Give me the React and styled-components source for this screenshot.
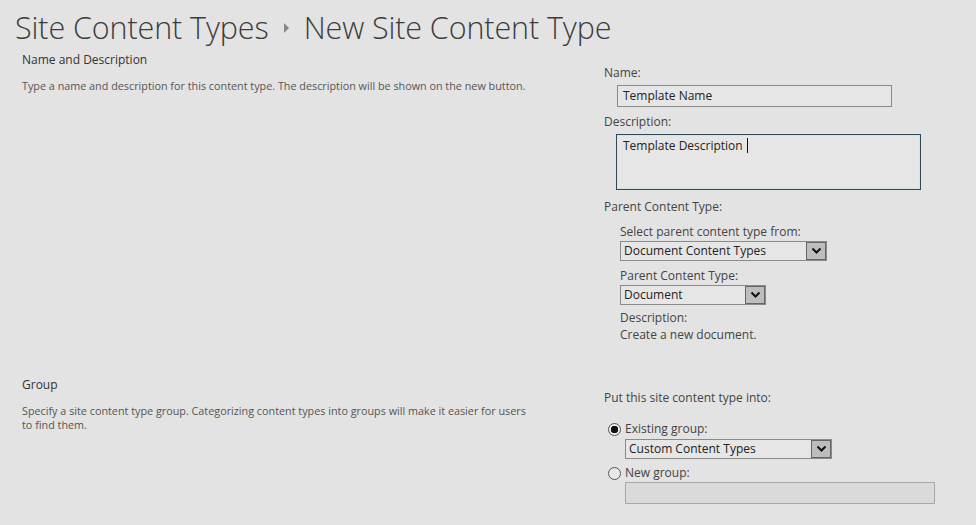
import React from 'react';
import styled, { createGlobalStyle } from 'styled-components';

const GlobalStyle = createGlobalStyle`
	html, body {
		margin: 0;
		background: #e3e3e3;
	}
	body {
		font-family: 'Open Sans', 'Noto Sans', sans-serif;
		color: #444;
		width: 976px;
		height: 525px;
		overflow: hidden;
	}
`;

function Chevron() {
	return (
		<svg width='11' height='8' viewBox='0 0 11 8'>
			<path d='M1.5 1.5 L5.5 5.5 L9.5 1.5' fill='none' stroke='#111' strokeWidth='2' />
		</svg>
	);
}

function Select({ value, width }) {
	return (
		<SelectBox $width={ width }>
			<span>{ value }</span>
			<ArrowBox><Chevron /></ArrowBox>
		</SelectBox>
	);
}

function Radio({ checked, label, top }) {
	return (
		<RadioRow $mt={ top }>
			<RadioDot $checked={ checked } />
			<span>{ label }</span>
		</RadioRow>
	);
}

export default function App() {
	return (
		<Page>
			<GlobalStyle />
			<Title>
				Site Content Types
				<Crumb />
				New Site Content Type
			</Title>

			<Section>
				<Info>
					<h2>Name and Description</h2>
					<p>Type a name and description for this content type. The description will be shown on the new button.</p>
				</Info>
				<Fields>
					<Label>Name:</Label>
					<TextBox $width={ 275 } $mt={ 4 } $ml={ 13 }>Template Name</TextBox>
					<Label $mt={ 7 }>Description:</Label>
					<TextArea>Template Description <Caret /></TextArea>
					<Label $mt={ 9 }>Parent Content Type:</Label>
					<SubFields>
						<Label $mt={ 9 }>Select parent content type from:</Label>
						<Select value='Document Content Types' width={ 207 } />
						<Label $mt={ 7 }>Parent Content Type:</Label>
						<Select value='Document' width={ 146 } />
						<Label $mt={ 5 }>Description:</Label>
						<Label $mt={ 1 }>Create a new document.</Label>
					</SubFields>
				</Fields>
			</Section>

			<Section $mt={ 34 }>
				<Info>
					<h2>Group</h2>
					<p>Specify a site content type group. Categorizing content types into groups will make it easier for users to find them.</p>
				</Info>
				<Fields>
					<Label>Put this site content type into:</Label>
					<Radio checked label='Existing group:' top={ 15 } />
					<GroupField $mt={ 1 }>
						<Select value='Custom Content Types' width={ 207 } />
					</GroupField>
					<Radio label='New group:' top={ 6 } />
					<GroupField $mt={ 1 }>
						<TextBox $width={ 310 } $mt={ 0 } $disabled />
					</GroupField>
				</Fields>
			</Section>
		</Page>
	);
}

const Page = styled.div`
	padding: 7px 0 0 15px;
`;

const Title = styled.h1`
	margin: 0;
	display: flex;
	align-items: center;
	font-size: 30.5px;
	line-height: 40px;
	font-weight: 300;
	color: #3c3c3c;
	letter-spacing: -0.1px;
`;

const Crumb = styled.span`
	display: inline-block;
	margin: 2px 15px 0 15px;
	width: 0;
	height: 0;
	border-top: 5px solid transparent;
	border-bottom: 5px solid transparent;
	border-left: 5px solid #888;
`;

const Section = styled.section`
	display: grid;
	grid-template-columns: 582px 1fr;
	padding-left: 7px;
	margin-top: ${ p => p.$mt ?? 5 }px;
`;

const Info = styled.div`
	h2 {
		margin: 0;
		font-size: 12px;
		line-height: 16px;
		font-weight: 400;
		color: #333;
	}

	p {
		margin: 11px 0 0;
		width: 515px;
		font-size: 10.8px;
		line-height: 14px;
		color: #555;
	}
`;

const Fields = styled.div`
	display: flex;
	flex-direction: column;
	align-items: flex-start;
	padding-top: 13px;
	font-size: 12px;
	line-height: 16px;
`;

const SubFields = styled.div`
	display: flex;
	flex-direction: column;
	align-items: flex-start;
	padding-left: 16px;
`;

const GroupField = styled.div`
	padding-left: 21px;
	margin-top: ${ p => p.$mt }px;
`;

const Label = styled.div`
	margin-top: ${ p => p.$mt ?? 0 }px;
	color: #444;
	white-space: nowrap;
`;

const TextBox = styled.div`
	box-sizing: border-box;
	width: ${ p => p.$width }px;
	height: 22px;
	margin: ${ p => p.$mt }px 0 0 ${ p => p.$ml ?? 0 }px;
	padding: 2px 5px;
	border: 1px solid ${ p => p.$disabled ? '#a8a8a8' : '#8a8a8a' };
	background: ${ p => p.$disabled ? '#dadada' : '#e6e6e6' };
	color: #222;
	font-size: 12px;
	line-height: 16px;
`;

const TextArea = styled.div`
	box-sizing: border-box;
	width: 305px;
	height: 56px;
	margin: 4px 0 0 12px;
	padding: 3px 6px;
	border: 1px solid #2d4a58;
	box-shadow: inset 0 0 0 1px #d6e2e6;
	background: #e6e6e6;
	color: #222;
	font-size: 12px;
	line-height: 16px;
`;

const Caret = styled.span`
	display: inline-block;
	width: 1px;
	height: 15px;
	margin-left: 1px;
	vertical-align: -3px;
	background: #111;
`;

const SelectBox = styled.div`
	box-sizing: border-box;
	display: flex;
	align-items: center;
	justify-content: space-between;
	width: ${ p => p.$width }px;
	height: 20px;
	margin-top: 1px;
	padding-left: 3px;
	border: 1px solid #8a8a8a;
	background: #e6e6e6;
	color: #222;
	font-size: 12px;
`;

const ArrowBox = styled.span`
	box-sizing: border-box;
	display: flex;
	align-items: center;
	justify-content: center;
	width: 20px;
	height: 18px;
	border: 1px solid #666;
	background: #bdbdbd;
`;

const RadioRow = styled.div`
	display: flex;
	align-items: center;
	gap: 4px;
	margin: ${ p => p.$mt }px 0 0 4px;
	color: #444;
`;

const RadioDot = styled.span`
	box-sizing: border-box;
	width: 13px;
	height: 13px;
	border-radius: 50%;
	border: 1px solid #555;
	background: ${ p => p.$checked ? 'radial-gradient(circle, #111 0 3.5px, #eee 4px)' : '#e8e8e8' };
`;
